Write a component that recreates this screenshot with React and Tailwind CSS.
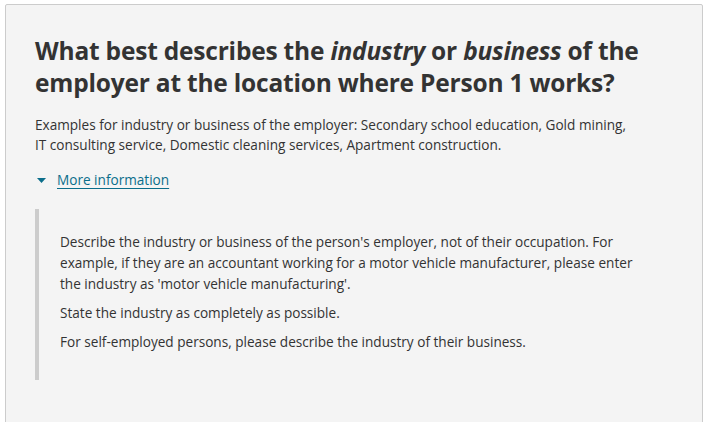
import React from 'react';

export default function App() {
  return (
    <div className="min-h-screen bg-white pt-[4px] pl-[5px] pr-[5px] text-[#333] font-['Open_Sans',sans-serif]">
      {/* Question card */}
      <div className="w-[698px] h-[430px] bg-[#f4f4f4] border border-[#ccc] rounded-[2px] pt-[30px] pl-[29px] pr-[20px]">
        <h1 className="text-[24.5px] leading-[32px] font-bold text-[#333] tracking-[-0.2px]">
          What best describes the <em>industry</em> or <em>business</em> of the
          <br />
          employer at the location where Person 1 works?
        </h1>

        <p className="mt-[16px] text-[13.6px] leading-[20px] text-[#333]">
          Examples for industry or business of the employer: Secondary school education, Gold mining,
          <br />
          IT consulting service, Domestic cleaning services, Apartment construction.
        </p>

        {/* Disclosure toggle */}
        <div className="mt-[15px] flex items-center h-[20px]">
          <span className="w-[22px] flex items-center pl-[2px]">
            <svg width="9" height="5" viewBox="0 0 9 5">
              <path d="M0 0 L9 0 L4.5 5 Z" fill="#0b6e8b" />
            </svg>
          </span>
          <a href="#" className="text-[13.6px] leading-[20px] text-[#0b6e8b] underline underline-offset-[3px]">
            More information
          </a>
        </div>

        {/* Expanded content */}
        <div className="mt-[19px] border-l-[4px] border-[#ccc] pl-[21px] pt-[22px] h-[171px] text-[13.6px] leading-[21px] text-[#333]">
          <p>
            Describe the industry or business of the person's employer, not of their occupation. For
            <br />
            example, if they are an accountant working for a motor vehicle manufacturer, please enter
            <br />
            the industry as 'motor vehicle manufacturing'.
          </p>
          <p className="mt-[8px]">State the industry as completely as possible.</p>
          <p className="mt-[8px]">For self-employed persons, please describe the industry of their business.</p>
        </div>
      </div>
    </div>
  );
}
